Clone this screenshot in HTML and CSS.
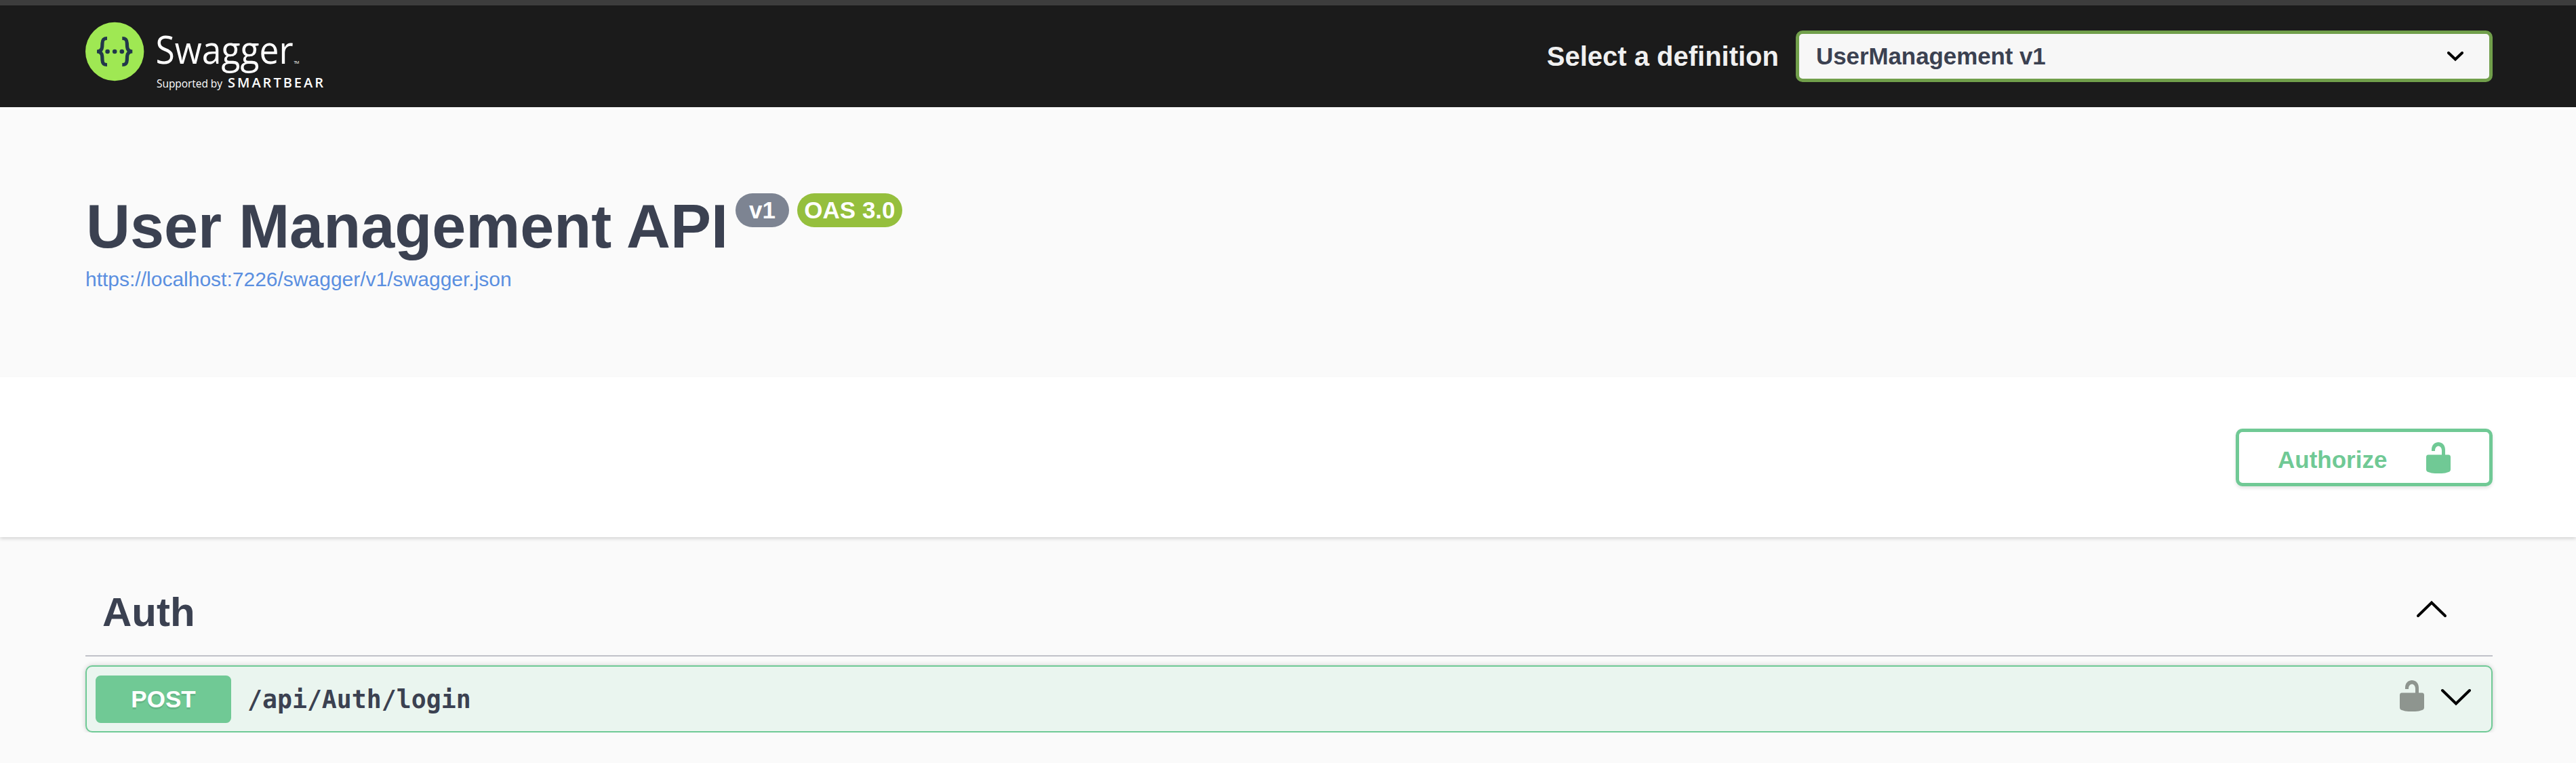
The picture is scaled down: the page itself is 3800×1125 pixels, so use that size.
FILE: index.html
```html
<!DOCTYPE html>
<html lang="en">
<head>
<meta charset="utf-8">
<title>Swagger UI</title>
<link rel="stylesheet" href="styles.css">
</head>
<body>
<header class="topbar">
  <svg class="logo" width="360" height="104" viewBox="126 30 360 104" role="img" aria-label="Swagger, supported by SmartBear">
    <circle cx="169.2" cy="76" r="43.2" fill="#9fe853"/>
    <g fill="none" stroke="#22384a" stroke-width="5.2">
      <path d="M158 56.500C152.400 56.500 151.200 59 151 63.500L150.700 69C150.400 73.500 148.300 76 143 76C148.300 76 150.400 78.500 150.700 83L151 88.500C151.200 93 152.400 95.500 158 95.500"/>
      <path d="M180.300 56.500C185.900 56.500 187.100 59 187.300 63.500L187.600 69C187.900 73.500 190 76 195.300 76C190 76 187.900 78.500 187.600 83L187.300 88.500C187.100 93 185.900 95.500 180.300 95.500"/>
    </g>
    <g fill="#22384a"><circle cx="158.600" cy="76" r="3.300"/><circle cx="169.200" cy="76" r="3.300"/><circle cx="179.800" cy="76" r="3.300"/></g>
    <text class="logo-name" x="229.500" y="93.500" textLength="203" lengthAdjust="spacingAndGlyphs">Swagger</text>
    <text class="logo-tm" x="433.500" y="94" textLength="8">TM</text>
    <text class="logo-by" x="231" y="129" textLength="97">Supported by</text>
    <text class="logo-owner" x="336" y="129" textLength="141">SMARTBEAR</text>
  </svg>
  <label class="definition">
    <span class="definition-label">Select a definition</span>
    <span class="select">
      <span>UserManagement v1</span>
      <svg width="24" height="15" viewBox="0 0 24 15"><path d="M2 2L12 11.500L22 2" fill="none" stroke="#000" stroke-width="4" stroke-linecap="round"/></svg>
    </span>
  </label>
</header>
<section class="info">
  <h1 class="title">User Management API<span class="badges"><span class="badge">v1</span><span class="badge badge-oas">OAS 3.0</span></span></h1>
  <a class="spec-link">https://localhost:7226/swagger/v1/swagger.json</a>
</section>
<section class="schemes">
  <button class="authorize">
    <span>Authorize</span>
    <svg class="lock" width="36" height="46" viewBox="0 0 36 46"><path d="M3 18.500H23V12.500C23 3.500 13 3.500 13 12.500V13H8V11C8 -3.600 28 -3.600 28 11V18.500H33Q36 18.500 36 22V40Q36 43 33 44Q28 46 23 46H13Q8 46 3 44Q0 43 0 40V22Q0 18.500 3 18.500Z"/></svg>
  </button>
</section>
<main class="operations">
  <div class="tag">
    <h2 class="tag-name">Auth</h2>
    <svg class="tag-arrow" width="46" height="26" viewBox="0 0 46 26"><path d="M3 23L23 3.500L43 23" fill="none" stroke="#000" stroke-width="4" stroke-linecap="round"/></svg>
  </div>
  <div class="opblock">
    <span class="method">POST</span>
    <span class="path">/api/Auth/login</span>
    <svg class="lock lock-gray" width="36" height="46" viewBox="0 0 36 46"><path d="M3 18.500H23V12.500C23 3.500 13 3.500 13 12.500V13H8V11C8 -3.600 28 -3.600 28 11V18.500H33Q36 18.500 36 22V40Q36 43 33 44Q28 46 23 46H13Q8 46 3 44Q0 43 0 40V22Q0 18.500 3 18.500Z"/></svg>
    <svg class="op-arrow" width="46" height="26" viewBox="0 0 46 26"><path d="M3 3L23 22.500L43 3" fill="none" stroke="#000" stroke-width="4" stroke-linecap="round"/></svg>
  </div>
</main>
</body>
</html>
```
FILE: styles.css
```css
* { box-sizing: border-box; }
body {
  margin: 0;
  background: #fafafa;
  color: #3b4151;
  font-family: "Liberation Sans", Arial, sans-serif;
  overflow: hidden;
}
svg { display: block; flex: none; }

.topbar {
  height: 158px;
  padding: 22px 123px 0 126px;
  border-top: 8px solid #3d3d3d;
  background: #1b1b1b;
  display: flex;
  justify-content: space-between;
  align-items: flex-start;
}
.logo text { fill: #fff; font-family: "Open Sans", "Noto Sans", sans-serif; }
.logo .logo-name { font-size: 56px; }
.logo .logo-tm { font-size: 6px; }
.logo .logo-by { font-size: 15.5px; }
.logo .logo-owner { font-size: 20px; font-weight: 600; }

.definition { display: flex; align-items: center; margin-top: 15px; }
.definition-label {
  margin-right: 25px;
  color: #f0f0f0;
  font-size: 40px;
  font-weight: 700;
  line-height: 46px;
}
.select {
  width: 1028px;
  height: 76px;
  padding: 0 38px 0 25px;
  border: 5px solid #719f4b;
  border-radius: 10px;
  background: #f7f7f7;
  font-size: 35px;
  font-weight: 700;
  letter-spacing: -.1px;
  display: flex;
  align-items: center;
  justify-content: space-between;
}

.info { height: 398px; padding: 125px 126px 0; }
.title {
  margin: 0;
  padding-left: 1px;
  font-size: 90px;
  line-height: 102px;
  font-weight: 700;
  display: flex;
  align-items: flex-start;
}
.badges { display: flex; gap: 12px; margin: 2px 0 0 11px; }
.badge {
  width: 79px;
  height: 50px;
  border-radius: 25px;
  background: #7d8492;
  color: #fff;
  font-size: 35px;
  line-height: 50px;
  text-align: center;
}
.badge-oas { width: 155px; background: #95bf3d; }
.spec-link { display: block; margin-top: 9px; color: #5a8fe0; font-size: 30px; line-height: 35px; }

.schemes {
  height: 236px;
  padding: 76px 123px 0;
  background: #fff;
  box-shadow: 0 2.5px 5px rgba(0, 0, 0, .15);
  display: flex;
  justify-content: flex-end;
}
.authorize {
  width: 379px;
  height: 85px;
  padding: 0 57px 0 57px;
  border: 5px solid #70c995;
  border-radius: 10px;
  background: transparent;
  box-shadow: 0 2.5px 5px rgba(0, 0, 0, .1);
  color: #70c995;
  font: 700 35px/40px "Liberation Sans", Arial, sans-serif;
  display: flex;
  justify-content: space-between;
  align-items: flex-start;
}
.authorize span { margin-top: 21px; }
.authorize .lock { margin-top: 15px; }
.lock { fill: #70c995; }
.lock-gray { fill: #8e958f; }

.operations { padding: 38px 123px 0 126px; }
.tag {
  height: 138px;
  padding: 0 67px 0 25px;
  border-bottom: 2px solid #c0c1c8;
  display: flex;
  justify-content: space-between;
  align-items: center;
}
.tag-name { margin: 10px 0 0; font-size: 60px; line-height: 68px; }
.tag-arrow { margin-bottom: 0; }
.opblock {
  height: 99px;
  margin-top: 13px;
  padding: 0 29px 0 13px;
  border: 2px solid #6fca96;
  border-radius: 10px;
  background: #eaf5ef;
  box-shadow: 0 0 7.5px rgba(0, 0, 0, .19);
  display: flex;
  align-items: center;
}
.method {
  width: 200px;
  height: 70px;
  border-radius: 7.5px;
  background: #70c995;
  color: #fff;
  font-size: 35px;
  font-weight: 700;
  line-height: 70px;
  text-align: center;
  text-shadow: 0 2.5px 0 rgba(0, 0, 0, .1);
}
.path {
  flex: 1;
  margin: 2px 0 0 24px;
  font: 700 36.500px/44px "DejaVu Sans Mono", monospace;
}
.op-arrow { margin: 0 0 5px 24px; }
.lock-gray { margin-bottom: 9px; }
```
